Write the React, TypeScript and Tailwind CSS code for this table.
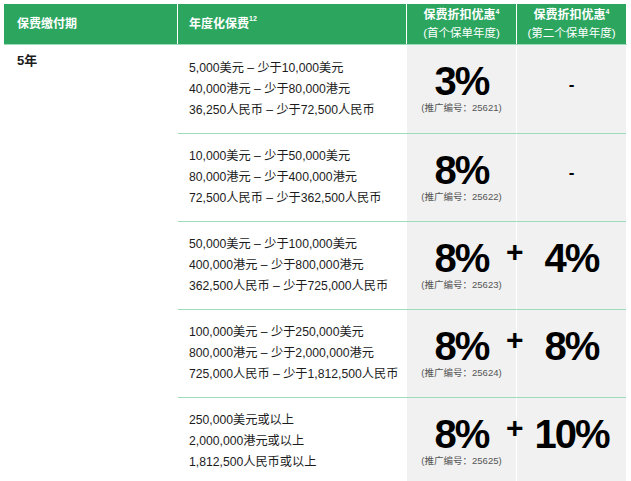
import React from 'react';

interface Tier {
  ranges: string[];
  first: string;
  code: string;
  second: string | null;
}

const tiers: Tier[] = [
  {
    ranges: ['5,000美元 – 少于10,000美元', '40,000港元 – 少于80,000港元', '36,250人民币 – 少于72,500人民币'],
    first: '3%',
    code: '25621',
    second: null,
  },
  {
    ranges: ['10,000美元 – 少于50,000美元', '80,000港元 – 少于400,000港元', '72,500人民币 – 少于362,500人民币'],
    first: '8%',
    code: '25622',
    second: null,
  },
  {
    ranges: ['50,000美元 – 少于100,000美元', '400,000港元 – 少于800,000港元', '362,500人民币 – 少于725,000人民币'],
    first: '8%',
    code: '25623',
    second: '4%',
  },
  {
    ranges: ['100,000美元 – 少于250,000美元', '800,000港元 – 少于2,000,000港元', '725,000人民币 – 少于1,812,500人民币'],
    first: '8%',
    code: '25624',
    second: '8%',
  },
  {
    ranges: ['250,000美元或以上', '2,000,000港元或以上', '1,812,500人民币或以上'],
    first: '8%',
    code: '25625',
    second: '10%',
  },
];

const font = { fontFamily: '"Liberation Sans", "Noto Sans CJK SC", sans-serif' };

const App: React.FC = () => {
  return (
    <div className="w-[631px] h-[481px] overflow-hidden bg-white p-[4px] text-[#1c1c1c]" style={font}>
      {/* Header */}
      <div className="flex h-[41px] border-b border-[#9fdcb9] text-white text-[12px] font-bold">
        <div className="w-[173px] bg-[#2ca65f] flex items-center pl-[13px]">保费缴付期</div>
        <div className="w-[1px] bg-white" />
        <div className="w-[228px] bg-[#2ca65f] flex items-center pl-[11px]">
          年度化保费<sup className="text-[7px] -top-[5px]">12</sup>
        </div>
        <div className="w-[1px] bg-white" />
        <div className="w-[109px] bg-[#2ca65f] flex flex-col items-center justify-center leading-[18px]">
          <span>
            保费折扣优惠<sup className="text-[7px] -top-[5px]">4</sup>
          </span>
          <span className="font-normal text-[11.5px]">(首个保单年度)</span>
        </div>
        <div className="w-[1px] bg-white" />
        <div className="w-[109px] bg-[#2ca65f] flex flex-col items-center justify-center leading-[18px]">
          <span>
            保费折扣优惠<sup className="text-[7px] -top-[5px]">4</sup>
          </span>
          <span className="font-normal text-[11.5px]">(第二个保单年度)</span>
        </div>
      </div>

      {/* Body */}
      <div className="flex">
        <div className="w-[174px] pl-[13px] pt-[8px] text-[13px] font-bold leading-[16px]">5年</div>
        <div className="flex flex-col">
          {tiers.map((tier, i) => (
            <div key={i} className={`flex h-[88px] ${i > 0 ? 'border-t border-[#9fdcb9]' : ''}`}>
              <div className="w-[229px] flex flex-col justify-center pl-[11px] text-[12.2px] leading-[21px]">
                {tier.ranges.map((r) => (
                  <span key={r}>{r}</span>
                ))}
              </div>
              <div className="w-[109px] bg-[#f0f1f0] flex flex-col items-center justify-center pb-[3px]">
                <span className="text-[40px] font-bold leading-[40px] tracking-[-2px] text-black">{tier.first}</span>
                <span className="text-[9.5px] leading-[13px] text-[#555]">(推广编号：{tier.code})</span>
              </div>
              <div className="w-[1px] bg-white" />
              <div className="relative w-[109px] bg-[#f0f1f0] flex items-center justify-center pb-[15px]">
                {tier.second ? (
                  <>
                    <span className="absolute left-[-11px] top-[15px] text-[30px] font-bold leading-[30px] text-black">+</span>
                    <span className="text-[40px] font-bold leading-[40px] tracking-[-2px] text-black">{tier.second}</span>
                  </>
                ) : (
                  <span className="text-[17px] font-bold text-black pt-[6px]">-</span>
                )}
              </div>
            </div>
          ))}
        </div>
      </div>
    </div>
  );
};

export default App;
